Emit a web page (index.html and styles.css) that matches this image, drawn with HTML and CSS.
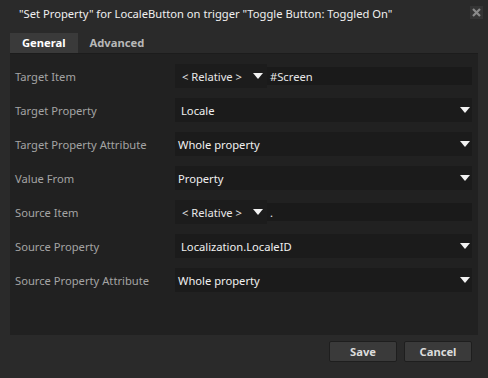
FILE: index.html
```html
<!DOCTYPE html>
<html lang="en">
<head>
    <meta charset="UTF-8">
    <title>Set Property</title>
    <link rel="stylesheet" href="styles.css">
</head>
<body>
    <div class="dialog">
        <div class="titlebar">
            <span class="title">"Set Property" for LocaleButton on trigger "Toggle Button: Toggled On"</span>
            <span class="close">
                <svg width="9" height="9" viewBox="0 0 9 9"><path d="M1 1 L8 8 M8 1 L1 8" stroke="#8a8a8a" stroke-width="2.2"/></svg>
            </span>
        </div>
        <div class="tabs">
            <div class="tab active">General</div>
            <div class="tab">Advanced</div>
        </div>
        <div class="panel">
            <div class="row">
                <label>Target Item</label>
                <div class="item-field">
                    <div class="relative">&lt; Relative &gt; <span class="arrow"></span></div>
                    <div class="path">#Screen</div>
                </div>
            </div>
            <div class="row">
                <label>Target Property</label>
                <div class="select pad-wide">Locale<span class="arrow"></span></div>
            </div>
            <div class="row">
                <label>Target Property Attribute</label>
                <div class="select">Whole property<span class="arrow"></span></div>
            </div>
            <div class="row">
                <label>Value From</label>
                <div class="select">Property<span class="arrow"></span></div>
            </div>
            <div class="row">
                <label>Source Item</label>
                <div class="item-field">
                    <div class="relative">&lt; Relative &gt; <span class="arrow"></span></div>
                    <div class="path">.</div>
                </div>
            </div>
            <div class="row">
                <label>Source Property</label>
                <div class="select pad-wide">Localization.LocaleID<span class="arrow"></span></div>
            </div>
            <div class="row">
                <label>Source Property Attribute</label>
                <div class="select">Whole property<span class="arrow"></span></div>
            </div>
        </div>
        <div class="buttons">
            <button>Save</button>
            <button>Cancel</button>
        </div>
    </div>
</body>
</html>
```

FILE: styles.css
```css
body {
    margin: 0;
    background: #2a2a2a;
    font-family: "Noto Sans", sans-serif;
    font-size: 11.2px;
    color: #e8e8e8;
}
.dialog {
    width: 488px;
    height: 378px;
}
.titlebar {
    height: 26px;
    display: flex;
    align-items: center;
    justify-content: space-between;
    padding: 0 5px 0 19px;
}
.title {
    color: #f0f0f0;
}
.close {
    width: 13px;
    height: 13px;
    background: #353535;
    display: flex;
    align-items: center;
    justify-content: center;
    margin-top: -2px;
}
.tabs {
    display: flex;
    margin: 7px 10px 0 10px;
    height: 20px;
    border-bottom: 1px solid #1c1c1c;
}
.tab {
    font-weight: bold;
    color: #b8b8b8;
    padding: 0 12px;
    line-height: 20px;
}
.tab.active {
    background: #3a3a3a;
    color: #ffffff;
}
.panel {
    margin: 0 10px;
    height: 281px;
    background: #212121;
    padding: 10px 6px 0 5px;
    box-sizing: border-box;
    display: flex;
    flex-direction: column;
    gap: 10px;
}
.row {
    display: flex;
    align-items: center;
    height: 24px;
}
label {
    width: 160px;
    color: #a4a4a4;
}
.select {
    flex: 1;
    height: 24px;
    background: #1b1b1b;
    display: flex;
    align-items: center;
    padding: 0 0 0 3px;
    color: #f0f0f0;
}
.select.pad-wide {
    padding-left: 6px;
}
.select .arrow {
    margin-left: auto;
    margin-right: 2px;
}
.arrow {
    display: inline-block;
    width: 0;
    height: 0;
    border-left: 5px solid transparent;
    border-right: 5px solid transparent;
    border-top: 6px solid #f2f2f2;
}
.item-field {
    flex: 1;
    display: flex;
    align-items: center;
    height: 24px;
}
.relative {
    width: 92px;
    height: 24px;
    box-sizing: border-box;
    background: #1c1c1c;
    display: flex;
    align-items: center;
    padding-left: 7px;
    gap: 11px;
}
.path {
    flex: 1;
    height: 18px;
    background: #1a1a1a;
    display: flex;
    align-items: center;
    padding-left: 3px;
}
.buttons {
    display: flex;
    justify-content: flex-end;
    gap: 7px;
    padding: 6px 16px 0 0;
}
button {
    width: 68px;
    height: 21px;
    background: #3a3a3a;
    border: 1px solid #1e1e1e;
    border-radius: 2px;
    color: #dcdcdc;
    font-family: "Noto Sans", sans-serif;
    font-size: 11.2px;
    font-weight: bold;
    padding: 0;
}
```
